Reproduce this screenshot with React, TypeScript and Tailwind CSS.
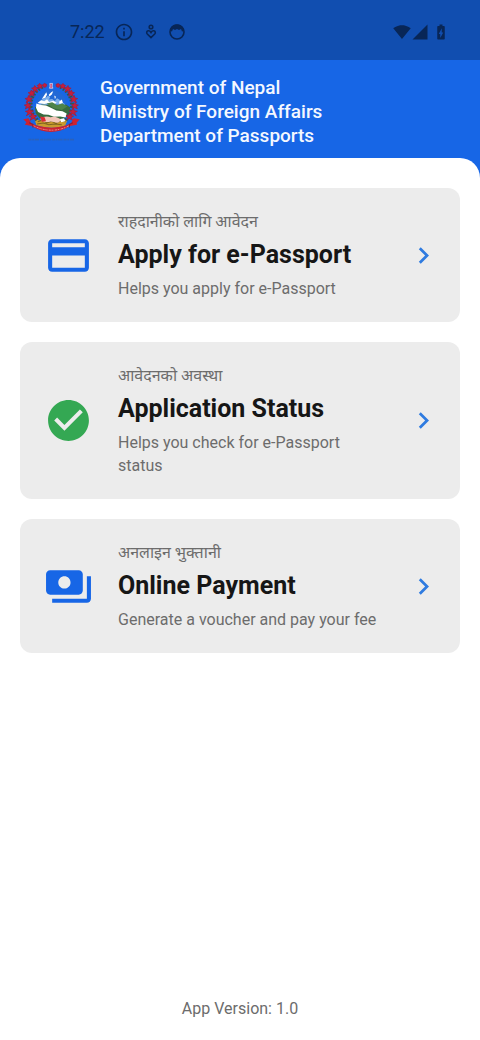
import type { ReactNode } from "react";
import {
  MdBatteryChargingFull,
  MdCheckCircle,
  MdChevronRight,
  MdCreditCard,
  MdOutlineInfo,
  MdPayments,
  MdSignalCellular4Bar,
  MdSignalWifi4Bar,
} from "react-icons/md";

type Service = {
  id: string;
  nepali: string;
  title: string;
  description: string;
  icon: ReactNode;
};

const services: Service[] = [
  {
    id: "apply",
    nepali: "राहदानीको लागि आवेदन",
    title: "Apply for e-Passport",
    description: "Helps you apply for e-Passport",
    icon: <MdCreditCard className="size-[49px] text-[#1766e6]" />,
  },
  {
    id: "status",
    nepali: "आवेदनको अवस्था",
    title: "Application Status",
    description: "Helps you check for e-Passport status",
    icon: <MdCheckCircle className="size-[49px] text-[#34a853]" />,
  },
  {
    id: "payment",
    nepali: "अनलाइन भुक्तानी",
    title: "Online Payment",
    description: "Generate a voucher and pay your fee",
    icon: <MdPayments className="size-[49px] text-[#1766e6]" />,
  },
];

// Rhododendron clusters along the left side, mirrored for the right
const flowers = [
  [104, 53, 6],
  [90, 55, 8],
  [76, 63, 10],
  [66, 76, 10],
  [58, 93, 11],
  [55, 112, 10],
  [60, 130, 12],
  [70, 144, 11],
];

function Wreath() {
  return (
    <g>
      <path
        d="M98 57C74 68 60 92 64 120c3 14 10 24 18 33"
        fill="none"
        stroke="#2c5a51"
        strokeWidth="11"
        strokeDasharray="5 5"
      />
      {flowers.map(([x, y, r]) => (
        <g key={`${x}-${y}`} transform={`translate(${x} ${y})`}>
          <path
            d={`M${-r} -2L-3 -4L-1 ${-r}L4 -4L${r} -3L5 2L${r - 2} ${r - 2}L1 5L${-r + 3} ${r - 1}L-4 2Z`}
            fill="#c41f3c"
            stroke="#a51c3b"
            strokeWidth="2"
            strokeLinejoin="round"
          />
        </g>
      ))}
    </g>
  );
}

function Emblem() {
  return (
    <svg viewBox="36 40 176 180" className="h-[62px] w-[61px] shrink-0" role="img" aria-label="Emblem of Nepal">
      <path d="M82 100C88 78 104 66 122 65c20 0 37 12 44 31l6 30-92-8z" fill="#2168d6" />
      {/* Snow peaks */}
      <path
        d="M84 104l12-10 10-4 8-8 6 6-4 6 10-2 8 6 6-8 6 4 10 8 8 6-10 4-14-4-12 4-14-4-16 4z"
        fill="#7fb0ea"
      />
      <path
        d="M96 92l8-12 5-7 2 6-5 10M116 80l8-8 5-2-4 9-7 6M132 82l5 4-3 7M84 103l10-7 9 3 8-6 6 8 12-4 10 6-10 5-14-4-12 3zM146 100l8-6 3 9-10 4z"
        fill="#fff"
      />
      <path d="M76 116l20-8 22 2 26 4 22-6 12 8-2 20-20 14H92l-14-16z" fill="#376b3e" />
      <path d="M110 105l16-3 14 8 16-5 14 9-16 10-24-5z" fill="#4d8448" />
      <path
        d="M80 105l14 5 14 1 14 7 16 8 18 2 12 6-3 12-16-3-18 1-16-6-14-1-16-7-6-12z"
        fill="#fff"
      />
      <path d="M74 149c22 12 78 14 98 0l-8 20c-25 10-60 9-84-1z" fill="#c99a2e" />
      <path
        d="M84 158l14-5 12 9 14-5 14 6 12-8 15 3M82 165l18-3 16 5 18-2 20 2"
        fill="none"
        stroke="#7d6420"
        strokeWidth="3"
      />
      <path d="M91 150c8-7 20-8 30-5 10-4 24 0 32 8l-10 8c-11 0-16-4-24-3-8 2-20 2-28-8z" fill="#f3c5b8" />
      <path d="M91 143l13 2 4 12-12 1z" fill="#d92c36" />
      <path d="M149 150l12-2 3 9-12 3z" fill="#fff" />
      <Wreath />
      <g transform="matrix(-1 0 0 1 247 0)">
        <Wreath />
      </g>
      <path d="M119 47h8l-1 8 2 6h-10l2-6z" fill="#d64a78" stroke="#d9e6fb" strokeWidth="2" />
      <path
        d="M42 151l15-3 8 15c36 17 82 17 116 0l7-15 18 3-9 10 1 6-20 4c-34 23-78 23-111 0l-20-4 4-7z"
        fill="#cc2231"
      />
      <path d="M59 161l11 5v9M186 161l-10 5v9" fill="none" stroke="#8e1e31" strokeWidth="3" />
      <path
        d="M72 170c32 17 72 17 103 0"
        fill="none"
        stroke="#f2aeb0"
        strokeWidth="2"
        strokeDasharray="4 2 2 2 6 2"
      />
      <path d="M57 210h132" stroke="#2b62bc" strokeWidth="5" strokeDasharray="9 2 5 2 13 3" />
    </svg>
  );
}

function HeartPersonIcon() {
  return (
    <svg viewBox="0 0 12 18" className="h-[18px] w-3" fill="none" stroke="currentColor" strokeWidth="1.6">
      <circle cx="6" cy="4" r="1.8" />
      <path d="M6 14.600L2.300 11c-1.100-1.200-.6-3 .9-3.200C4.500 7.600 5.300 8.300 6 9.500c.7-1.200 1.500-1.900 2.800-1.700 1.500.2 2 2 .9 3.200z" />
    </svg>
  );
}

function FaceIcon() {
  return (
    <svg viewBox="0 0 18 18" className="size-[18px]">
      <circle cx="9" cy="9" r="7" fill="none" stroke="currentColor" strokeWidth="1.6" />
      <path
        d="M2 8C2 4 5 1.500 9 1.500S16 4 16 8l-2 .5-1-2.500-2 1-2-1-2 1-2-1-1 2.500z"
        fill="currentColor"
      />
    </svg>
  );
}

function StatusBar() {
  return (
    <div className="flex h-[60px] items-center justify-between bg-[#114eb0] pt-1 pr-[30px] pl-[70px] text-[#082657]">
      <div className="flex items-center gap-[11px]">
        <span className="text-lg leading-6">7:22</span>
        <MdOutlineInfo className="-ml-0.5 size-5" />
        <HeartPersonIcon />
        <FaceIcon />
      </div>
      <div className="flex items-center">
        <MdSignalWifi4Bar className="size-[18px]" />
        <MdSignalCellular4Bar className="size-[18px]" />
        <MdBatteryChargingFull className="ml-[3px] size-[18px]" />
      </div>
    </div>
  );
}

function ServiceCard({ service }: { service: Service }) {
  return (
    <button
      type="button"
      className="flex w-full items-center rounded-xl bg-[#ececec] py-[22px] pr-5 pl-6 text-left"
    >
      <span className="shrink-0">{service.icon}</span>
      <span className="ml-[25px] flex min-w-0 flex-1 flex-col">
        <span className="text-base leading-[23px] text-[#6c6c6c]">{service.nepali}</span>
        <span className="text-[25px] leading-[44px] font-bold text-[#161616]">{service.title}</span>
        <span className="pr-6 text-base leading-[23px] text-[#6c6c6c]">{service.description}</span>
      </span>
      <MdChevronRight className="size-[33px] shrink-0 text-[#2f7be0]" />
    </button>
  );
}

export default function App() {
  return (
    <div className="flex min-h-screen flex-col bg-[#1766e6] font-[Roboto,'Noto_Sans_Devanagari','Noto_Sans',sans-serif]">
      <StatusBar />

      <header className="flex h-[98px] items-center pt-1.5 pl-[21px]">
        <Emblem />
        <h1 className="ml-[18px] text-[19px] leading-6 font-medium text-[#f4f8ff]">
          Government of Nepal
          <br />
          Ministry of Foreign Affairs
          <br />
          Department of Passports
        </h1>
      </header>

      <main className="flex flex-1 flex-col rounded-t-[20px] bg-white px-5 pt-[30px]">
        <div className="flex flex-col gap-5">
          {services.map((service) => (
            <ServiceCard key={service.id} service={service} />
          ))}
        </div>
        <p className="mt-auto pb-[19px] text-center text-base leading-6 text-[#6c6c6c]">App Version: 1.0</p>
      </main>
    </div>
  );
}
